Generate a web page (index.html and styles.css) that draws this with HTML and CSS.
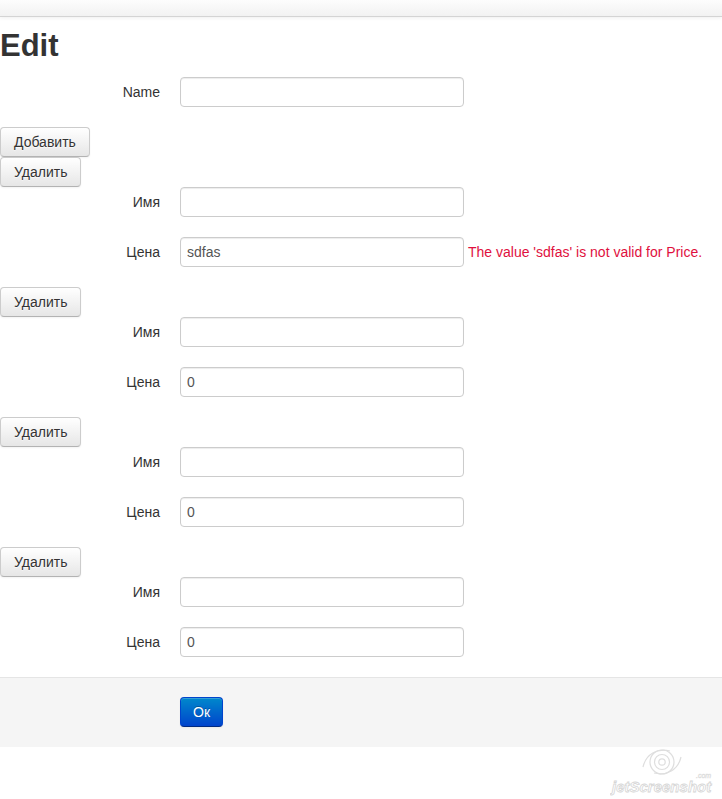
FILE: index.html
```html
<!DOCTYPE html>
<html>
<head>
<meta charset="utf-8">
<title>Edit</title>
<link rel="stylesheet" href="styles.css">
</head>
<body>
<div class="navbar"></div>
<h1 class="title">Edit</h1>
<form class="form-horizontal">
  <div class="control-group">
    <label class="control-label">Name</label>
    <div class="controls"><input class="field" type="text" value=""></div>
  </div>
  <div class="btn-row"><button type="button" class="btn">Добавить</button></div>

  <div class="btn-row"><button type="button" class="btn">Удалить</button></div>
  <div class="control-group">
    <label class="control-label">Имя</label>
    <div class="controls"><input class="field" type="text" value=""></div>
  </div>
  <div class="control-group">
    <label class="control-label">Цена</label>
    <div class="controls"><input class="field" type="text" value="sdfas"><span class="field-error">The value 'sdfas' is not valid for Price.</span></div>
  </div>

  <div class="btn-row"><button type="button" class="btn">Удалить</button></div>
  <div class="control-group">
    <label class="control-label">Имя</label>
    <div class="controls"><input class="field" type="text" value=""></div>
  </div>
  <div class="control-group">
    <label class="control-label">Цена</label>
    <div class="controls"><input class="field" type="text" value="0"></div>
  </div>

  <div class="btn-row"><button type="button" class="btn">Удалить</button></div>
  <div class="control-group">
    <label class="control-label">Имя</label>
    <div class="controls"><input class="field" type="text" value=""></div>
  </div>
  <div class="control-group">
    <label class="control-label">Цена</label>
    <div class="controls"><input class="field" type="text" value="0"></div>
  </div>

  <div class="btn-row"><button type="button" class="btn">Удалить</button></div>
  <div class="control-group">
    <label class="control-label">Имя</label>
    <div class="controls"><input class="field" type="text" value=""></div>
  </div>
  <div class="control-group">
    <label class="control-label">Цена</label>
    <div class="controls"><input class="field" type="text" value="0"></div>
  </div>

  <div class="form-actions">
    <button type="button" class="btn btn-primary">Ок</button>
  </div>
</form>
<div class="watermark">
  <svg width="106" height="50" viewBox="0 0 106 50">
    <g fill="none" stroke="#dedede" stroke-width="1.2">
      <circle cx="52" cy="15" r="12"/>
      <circle cx="52" cy="15" r="7.5"/>
      <circle cx="52" cy="15" r="3.2"/>
      <path d="M33 20 C36 7 47 1 60 4"/>
      <path d="M71 10 C68 23 57 29 44 26"/>
    </g>
    <text x="86" y="31" font-family="Liberation Sans, sans-serif" font-size="7" font-style="italic" fill="#fff" stroke="#dcdcdc" stroke-width="0.5">.com</text>
    <text x="2" y="45" font-family="Liberation Sans, sans-serif" font-size="15" font-style="italic" font-weight="bold" fill="#fff" stroke="#d6d6d6" stroke-width="0.8">jetScreenshot</text>
  </svg>
</div>
</body>
</html>
```

FILE: styles.css
```css
html, body {
  margin: 0;
  padding: 0;
}
body {
  font-family: "Liberation Sans", Arial, sans-serif;
  font-size: 14px;
  line-height: 20px;
  color: #333;
  background: #fff;
}
.navbar {
  height: 16px;
  background: linear-gradient(#fdfdfd, #f2f2f2);
  border-bottom: 1px solid #d4d4d4;
  box-shadow: 0 1px 4px rgba(0, 0, 0, 0.065);
}
.title {
  margin: 9px 0 11px;
  font-size: 31px;
  line-height: 40px;
  font-weight: bold;
  color: #333;
}
.form-horizontal {
  margin: 0;
}
.control-group {
  margin-bottom: 20px;
  display: flex;
  align-items: flex-start;
}
.control-label {
  width: 160px;
  flex: none;
  padding-top: 5px;
  text-align: right;
  line-height: 20px;
}
.controls {
  margin-left: 20px;
  display: flex;
  align-items: center;
  height: 30px;
}
.field {
  box-sizing: border-box;
  width: 284px;
  height: 30px;
  padding: 4px 6px;
  margin: 0;
  font-family: "Liberation Sans", Arial, sans-serif;
  font-size: 14px;
  line-height: 20px;
  color: #555;
  background: #fff;
  border: 1px solid #ccc;
  border-radius: 4px;
  box-shadow: inset 0 1px 1px rgba(0, 0, 0, 0.075);
  outline: none;
}
.field-error {
  margin-left: 4px;
  color: #e0103e;
  white-space: nowrap;
}
.btn-row {
  display: flex;
}
.btn {
  box-sizing: border-box;
  height: 30px;
  padding: 4px 13px;
  margin: 0;
  font-family: "Liberation Sans", Arial, sans-serif;
  font-size: 14px;
  line-height: 20px;
  color: #333;
  text-shadow: 0 1px 1px rgba(255, 255, 255, 0.75);
  background: linear-gradient(#ffffff, #e6e6e6);
  border: 1px solid #cccccc;
  border-bottom-color: #b3b3b3;
  border-radius: 4px;
  box-shadow: inset 0 1px 0 rgba(255, 255, 255, 0.2), 0 1px 2px rgba(0, 0, 0, 0.05);
  cursor: pointer;
}
.btn-primary {
  padding: 4px 12px;
  color: #fff;
  text-shadow: 0 -1px 0 rgba(0, 0, 0, 0.25);
  background: linear-gradient(#0088cc, #0044cc);
  border-color: #0044cc #0044cc #002a80;
}
.form-actions {
  padding: 19px 20px 20px 180px;
  margin: 0;
  background: #f5f5f5;
  border-top: 1px solid #e5e5e5;
  display: flex;
}
.watermark {
  display: flex;
  justify-content: flex-end;
  padding: 0 6px 0 0;
}
.watermark svg {
  display: block;
}
```
